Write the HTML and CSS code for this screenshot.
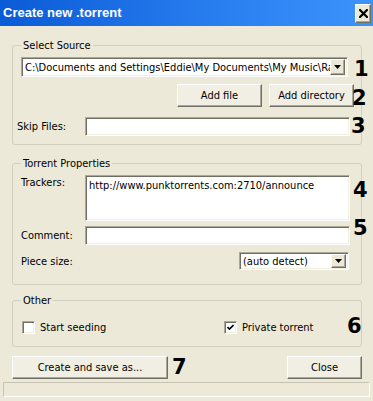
FILE: index.html
```html
<!DOCTYPE html>
<html lang="en">
<head>
<meta charset="utf-8">
<title>Create new .torrent</title>
<link rel="stylesheet" href="styles.css">
</head>
<body>
<div class="window">
	<div class="titlebar">
		<span class="title">Create new .torrent</span>
		<button type="button" class="closeBtn">
			<svg width="9" height="9" viewBox="0 0 9 9"><path d="M1 1L8 8M8 1L1 8" stroke="#000" stroke-width="2.2" stroke-linecap="square"/></svg>
		</button>
	</div>
	<div class="main">
		<fieldset class="group groupSource">
			<legend>Select Source</legend>
			<div class="row comboRow">
				<div class="combo sourceCombo">
					<span class="comboText">C:\Documents and Settings\Eddie\My Documents\My Music\Radiohead</span>
					<span class="dropBtn"><svg width="7" height="4" viewBox="0 0 7 4"><path d="M0 0H7L3.5 4Z" fill="#000"/></svg></span>
				</div>
				<span class="mark mark1">1</span>
			</div>
			<div class="row btnRow">
				<button type="button" class="btn">Add file</button>
				<button type="button" class="btn">Add directory</button>
				<span class="mark mark2">2</span>
			</div>
			<div class="row fieldRow skipRow">
				<label class="lbl lblSkip">Skip Files:</label>
				<input type="text" class="edit">
				<span class="mark mark3">3</span>
			</div>
		</fieldset>

		<fieldset class="group groupProps">
			<legend>Torrent Properties</legend>
			<div class="row fieldRow trackerRow">
				<label class="lbl lblTrackers">Trackers:</label>
				<textarea class="edit trackers">http://www.punktorrents.com:2710/announce</textarea>
				<span class="mark mark4">4</span>
			</div>
			<div class="row fieldRow commentRow">
				<label class="lbl">Comment:</label>
				<input type="text" class="edit">
				<span class="mark mark5">5</span>
			</div>
			<div class="row fieldRow pieceRow">
				<label class="lbl">Piece size:</label>
				<div class="combo pieceCombo">
					<span class="comboText">(auto detect)</span>
					<span class="dropBtn"><svg width="7" height="4" viewBox="0 0 7 4"><path d="M0 0H7L3.5 4Z" fill="#000"/></svg></span>
				</div>
			</div>
		</fieldset>

		<fieldset class="group groupOther">
			<legend>Other</legend>
			<div class="row checkRow">
				<label class="check"><span class="box"></span>Start seeding</label>
				<label class="check"><span class="box"><svg width="7" height="7" viewBox="0 0 7 7"><path d="M0.5 3L2.5 5L6.5 1" stroke="#000" stroke-width="1.6" fill="none"/></svg></span>Private torrent</label>
				<span class="mark mark6">6</span>
			</div>
		</fieldset>

		<div class="actions">
			<button type="button" class="btn createBtn">Create and save as...</button>
			<span class="mark7">7</span>
			<button type="button" class="btn closeAction">Close</button>
		</div>
	</div>
	<div class="statusbar"></div>
</div>
</body>
</html>
```

FILE: styles.css
```css
* {
	box-sizing: border-box;
}
body {
	margin: 0;
	font-family: "DejaVu Sans Condensed", "DejaVu Sans", sans-serif;
	font-size: 11px;
	color: #000;
	background: #ece9d8;
}
.window {
	width: 373px;
	height: 401px;
	display: flex;
	flex-direction: column;
	background: #ece9d8;
	overflow: hidden;
}
.titlebar {
	height: 26px;
	flex: none;
	display: flex;
	align-items: flex-start;
	justify-content: space-between;
	background: linear-gradient(to right, #0a5bd6, #2a7ff0 60%, #3d93fc);
}
.title {
	margin: 5px 0 0 3px;
	font-family: "Liberation Sans", Arial, sans-serif;
	font-weight: bold;
	font-size: 13px;
	line-height: 16px;
	color: #fff;
}
.closeBtn {
	margin: 4px 2px 0 0;
	width: 16px;
	height: 19px;
	padding: 0;
	display: flex;
	align-items: center;
	justify-content: center;
	background: #ece9d8;
	border: 1px solid;
	border-color: #fff #716f64 #716f64 #fff;
	box-shadow: inset -1px -1px #aca899;
}
.main {
	flex: 1;
	padding: 0 12px;
	display: flex;
	flex-direction: column;
}
.group {
	margin: 0;
	width: 350px;
	padding: 5px 8px 8px 8px;
	border: 1px solid #d0d0bf;
	border-radius: 3px;
}
.group legend {
	padding: 0 2px;
	line-height: 13px;
}
.groupSource {
	margin-top: 13px;
}
.groupProps {
	margin-top: 12px;
	padding-bottom: 14px;
}
.groupOther {
	margin-top: 9px;
	padding-bottom: 11px;
}
.row {
	position: relative;
	display: flex;
	align-items: center;
}
.mark {
	position: absolute;
	left: 331px;
	font-family: "DejaVu Sans", sans-serif;
	font-weight: bold;
	font-size: 21px;
	line-height: 21px;
}
.mark1 { top: 2px; left: 333px; }
.mark2 { top: 4px; }
.mark3 { top: -1px; left: 330px; }
.mark4 { top: 5px; left: 332px; }
.mark5 { top: -8px; left: 332px; }
.mark6 { top: -4px; left: 326px; }

/* sunken edit fields */
.edit, .combo, .box {
	border: 1px solid;
	border-color: #aca899 #fff #fff #aca899;
	box-shadow: inset 1px 1px #716f64, inset -1px -1px #f1efe2;
	background: #fff;
}
.edit {
	width: 265px;
	height: 19px;
	margin: 0;
	padding: 2px 3px;
	font: inherit;
	outline: none;
}
.trackers {
	height: 46px;
	resize: none;
	padding: 3px 3px;
	line-height: 13px;
	overflow: hidden;
}
.combo {
	height: 20px;
	display: flex;
	align-items: center;
	padding: 0 2px 0 3px;
}
.comboText {
	flex: 1;
	white-space: nowrap;
	overflow: hidden;
}
.dropBtn {
	flex: none;
	width: 15px;
	height: 16px;
	display: flex;
	align-items: center;
	justify-content: center;
	background: #ece9d8;
	border: 1px solid;
	border-color: #fff #716f64 #716f64 #fff;
	box-shadow: inset -1px -1px #aca899;
}
.sourceCombo {
	width: 327px;
}
.pieceCombo {
	width: 110px;
	height: 18px;
	margin-left: auto;
	margin-right: 4px;
}
.pieceCombo .dropBtn {
	height: 14px;
}
.btn {
	height: 23px;
	margin: 0;
	padding: 0;
	font: inherit;
	color: #000;
	background: #f1efe3;
	border: 1px solid;
	border-color: #fff #716f64 #716f64 #fff;
	box-shadow: inset -1px -1px #aca899;
}
.btnRow {
	margin-top: 7px;
	justify-content: flex-end;
	gap: 7px;
	margin-right: -1px;
}
.btnRow .btn {
	width: 85px;
}
.lbl {
	width: 64px;
	flex: none;
}
.lblSkip {
	margin-left: -4px;
	width: 68px;
}
.skipRow {
	margin-top: 10px;
}
.trackerRow {
	align-items: flex-start;
}
.lblTrackers {
	margin-top: 1px;
}
.commentRow {
	margin-top: 5px;
}
.pieceRow {
	margin-top: 7px;
}
.checkRow {
	margin-top: 8px;
	height: 15px;
}
.check {
	display: flex;
	align-items: center;
	gap: 5px;
}
.check:first-child {
	width: 202px;
	margin-left: 1px;
}
.box {
	width: 13px;
	height: 13px;
	display: flex;
	align-items: center;
	justify-content: center;
}
.actions {
	margin-top: 9px;
	display: flex;
	align-items: flex-start;
}
.createBtn {
	width: 156px;
}
.mark7 {
	margin: 1px 0 0 4px;
	font-family: "DejaVu Sans", sans-serif;
	font-weight: bold;
	font-size: 21px;
	line-height: 21px;
}
.closeAction {
	width: 75px;
	margin-left: auto;
	margin-right: -1px;
}
.statusbar {
	flex: none;
	height: 15px;
	margin: 0 3px 4px 3px;
	border: 1px solid;
	border-color: #c5c2b2 #fff #fff #c5c2b2;
}
```
